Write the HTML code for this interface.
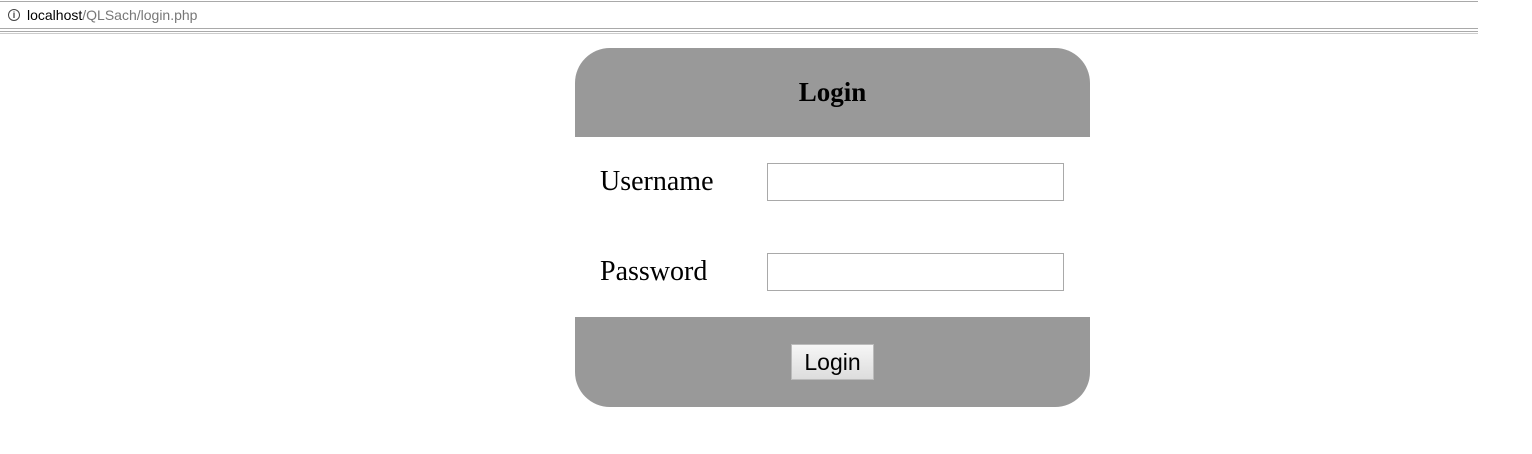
<!DOCTYPE html>
<html><head><style>
body{margin:0;width:1532px;height:454px;background:#fff;position:relative;overflow:hidden;font-family:"Liberation Serif",serif}
.bar{position:absolute;left:0;top:1px;width:1478px;height:26px;border-top:1px solid #a9a9a9;border-bottom:1px solid #a9a9a9}
.bar span{position:absolute;left:27px;top:5px;font:14px "Liberation Sans",sans-serif;color:#777}
.bar b{font-weight:normal;color:#000}
.ic{position:absolute;left:8px;top:7px;width:10px;height:10px;border:1.5px solid #444;border-radius:50%;font:bold 9px "Liberation Sans";text-align:center;line-height:10px;color:#444}
.l1{position:absolute;left:0;top:31px;width:1478px;height:1px;background:#aaa}
.l2{position:absolute;left:0;top:33px;width:1478px;height:1px;background:#ccc}
.hd{position:absolute;left:575px;top:48px;width:515px;height:89px;background:#999;border-radius:35px 35px 0 0;text-align:center;font-weight:bold;font-size:27px;line-height:89px}
.ft{position:absolute;left:575px;top:317px;width:515px;height:90px;background:#999;border-radius:0 0 35px 35px}
.lab{position:absolute;left:600px;font-size:28px}
.inp{position:absolute;left:767px;width:295px;height:36px;border:1px solid #a9a9a9}
.btn{position:absolute;left:216px;top:27px;width:83px;height:36px;background:linear-gradient(#f6f6f6,#ddd);font:23px "Liberation Sans",sans-serif;text-align:center;line-height:34px;box-sizing:border-box;border:1px solid #bbb}
</style></head><body>
<div class="bar"><div class="ic">i</div><span><b>localhost</b>/QLSach/login.php</span></div>
<div class="l1"></div><div class="l2"></div>
<div class="hd">Login</div>
<div class="lab" style="top:166px">Username</div>
<div class="inp" style="top:163px"></div>
<div class="lab" style="top:256px">Password</div>
<div class="inp" style="top:253px"></div>
<div class="ft"><div class="btn">Login</div></div>
</body></html>
